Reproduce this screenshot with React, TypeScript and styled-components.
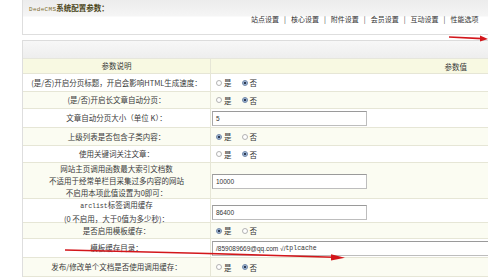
import React from "react";
import styled, { createGlobalStyle } from "styled-components";

const GlobalStyle = createGlobalStyle`
  html, body { margin: 0; padding: 0; background: #fff; overflow: hidden; }
  body { font-family: "Noto Sans CJK SC", "Liberation Sans", sans-serif; color: #333; }
`;

const Page = styled.div`
  position: relative;
  width: 488px;
  padding-left: 22px;
  box-sizing: border-box;
`;

const TopPanel = styled.div`
  height: 35px;
  box-sizing: border-box;
  border-left: 1px solid #dedede;
  border-bottom: 1px solid #dedede;
  background: linear-gradient(#ececec 0, #f5f5f5 16px, #fff 17px);
  display: flex;
  flex-direction: column;
`;

const TitleBar = styled.div`
  height: 13px;
  padding: 2px 0 0 6px;
  font-size: 7.5px;
  line-height: 12px;
  font-weight: 700;
  color: #4a4518;
`;

const Brand = styled.span`
  font-family: "Liberation Mono", monospace;
  font-size: 6px;
  font-weight: 400;
  color: #7d6e2c;
  letter-spacing: 0.3px;
`;

const TabBar = styled.div`
  display: flex;
  align-items: center;
  margin-left: 228px;
  height: 7px;
  font-size: 7px;
  line-height: 8px;
  color: #333;
  white-space: nowrap;
`;

const Tab = styled.span``;

const Sep = styled.span`
  margin: 0 5px;
  color: #444;
`;

const ConfigPanel = styled.div`
  margin-top: 5px;
  border-left: 1px solid #dedede;
`;

const Strip = styled.div`
  height: 19px;
  box-sizing: border-box;
  border-top: 1px solid #dcdcdc;
  border-bottom: 1px solid #e6e6dc;
  background: linear-gradient(#f7f7f7, #eeeeee);
`;

const Row = styled.div<{ $h: number; $bg: string }>`
  display: grid;
  grid-template-columns: 188px 1fr;
  height: ${(p) => p.$h}px;
  box-sizing: border-box;
  border-bottom: 1px solid #e6e6d6;
  background: ${(p) => p.$bg};
`;

const Label = styled.div`
  display: flex;
  flex-direction: column;
  align-items: center;
  justify-content: center;
  text-align: center;
  border-right: 1px solid #e6e6d6;
  font-size: 7.5px;
  line-height: 12px;
  color: #3a3a3a;
  white-space: nowrap;
`;

const HeadValue = styled.div`
  display: flex;
  align-items: center;
  justify-content: flex-end;
  padding-right: 21px;
  font-size: 7.5px;
  color: #3a3a3a;
`;

const Value = styled.div`
  display: flex;
  align-items: center;
  padding-left: 1px;
  min-width: 0;
  font-size: 7.5px;
  color: #333;
`;

const Mono = styled.span`
  font-family: "Liberation Mono", monospace;
  font-size: 6.5px;
`;

const RadioGroup = styled.div`
  display: flex;
  align-items: center;
  padding-left: 4px;
`;

const RadioItem = styled.label`
  display: flex;
  align-items: center;
  margin-right: 10px;
  font-size: 7.5px;
  color: #333;
`;

const Dot = styled.span<{ $on: boolean }>`
  width: 6px;
  height: 6px;
  border-radius: 50%;
  box-sizing: border-box;
  margin-right: 2px;
  border: 1px solid ${(p) => (p.$on ? "#6f86a8" : "#b4b4b4")};
  background: ${(p) =>
    p.$on
      ? "radial-gradient(circle, #2e3a52 0 1.1px, #9fb8d8 1.6px, #e4ecf5 3px)"
      : "radial-gradient(circle, #fff 0 1.5px, #e6e6e6 3px)"};
`;

const Field = styled.div<{ $wide?: boolean }>`
  width: ${(p) => (p.$wide ? "auto" : "155px")};
  flex: ${(p) => (p.$wide ? "1" : "none")};
  height: 15px;
  box-sizing: border-box;
  border: 1px solid #bdbdbd;
  border-top-color: #9a9a9a;
  border-left-color: #a8a8a8;
  border-right-width: ${(p) => (p.$wide ? "0" : "1px")};
  background: #fff;
  display: flex;
  align-items: center;
  padding-left: 3px;
  font-family: "Liberation Sans", sans-serif;
  font-size: 6.5px;
  color: #333;
  white-space: nowrap;
`;

const Overlay = styled.svg`
  position: absolute;
  left: 0;
  top: 0;
  pointer-events: none;
`;

const YesNo = ({ yes }: { yes: boolean }) => (
  <RadioGroup>
    <RadioItem>
      <Dot $on={yes} />是
    </RadioItem>
    <RadioItem>
      <Dot $on={!yes} />否
    </RadioItem>
  </RadioGroup>
);

const tabs = ["站点设置", "核心设置", "附件设置", "会员设置", "互动设置", "性能选项"];

const ALT = "#fbfcf2";
const WHITE = "#ffffff";

export default function App() {
  return (
    <>
      <GlobalStyle />
      <Page>
        <TopPanel>
          <TitleBar>
            <Brand>DedeCMS</Brand>系统配置参数：
          </TitleBar>
          <TabBar>
            {tabs.map((t, i) => (
              <React.Fragment key={t}>
                {i > 0 && <Sep>|</Sep>}
                <Tab>{t}</Tab>
              </React.Fragment>
            ))}
          </TabBar>
        </TopPanel>
        <ConfigPanel>
          <Strip />
          <Row $h={15} $bg="#f8f9e2">
            <Label>参数说明</Label>
            <HeadValue>参数值</HeadValue>
          </Row>
          <Row $h={18} $bg={WHITE}>
            <Label>(是/否)开启分页标题，开启会影响HTML生成速度：</Label>
            <Value>
              <YesNo yes={false} />
            </Value>
          </Row>
          <Row $h={17} $bg={ALT}>
            <Label>(是/否)开启长文章自动分页：</Label>
            <Value>
              <YesNo yes={false} />
            </Value>
          </Row>
          <Row $h={19} $bg={WHITE}>
            <Label>文章自动分页大小（单位 K）：</Label>
            <Value>
              <Field>5</Field>
            </Value>
          </Row>
          <Row $h={18} $bg={ALT}>
            <Label>上级列表是否包含子类内容：</Label>
            <Value>
              <YesNo yes={true} />
            </Value>
          </Row>
          <Row $h={17} $bg={WHITE}>
            <Label>使用关键词关注文章：</Label>
            <Value>
              <YesNo yes={false} />
            </Value>
          </Row>
          <Row $h={36} $bg={ALT}>
            <Label>
              <span>网站主页调用函数最大索引文档数</span>
              <span>不适用于经常单栏目采集过多内容的网站</span>
              <span>不启用本项此值设置为0即可：</span>
            </Label>
            <Value>
              <Field>10000</Field>
            </Value>
          </Row>
          <Row $h={24} $bg={WHITE}>
            <Label>
              <span>
                <Mono>arclist</Mono>标签调用缓存
              </span>
              <span>(0 不启用，大于0值为多少秒)：</span>
            </Label>
            <Value>
              <Field>86400</Field>
            </Value>
          </Row>
          <Row $h={16} $bg={ALT}>
            <Label>是否启用模板缓存：</Label>
            <Value>
              <YesNo yes={true} />
            </Value>
          </Row>
          <Row $h={19} $bg={WHITE}>
            <Label>模板缓存目录：</Label>
            <Value>
              <Field $wide>
                /859089669@qq.com √/<Mono>tplcache</Mono>
              </Field>
            </Value>
          </Row>
          <Row $h={19} $bg={ALT}>
            <Label>发布/修改单个文档是否使用调用缓存：</Label>
            <Value>
              <YesNo yes={false} />
            </Value>
          </Row>
        </ConfigPanel>
        <Overlay width="488" height="278" viewBox="0 0 488 278">
          <line x1="449" y1="37" x2="482" y2="38.6" stroke="#d3161b" strokeWidth="1.6" />
          <polygon points="480,35.4 488,38.9 480,41.4" fill="#d3161b" />
          <path d="M65 250 Q200 253 334 257.2" stroke="#d3161b" strokeWidth="1.6" fill="none" />
          <polygon points="331,254.3 345,257.8 331,260.6" fill="#d3161b" />
        </Overlay>
      </Page>
    </>
  );
}
